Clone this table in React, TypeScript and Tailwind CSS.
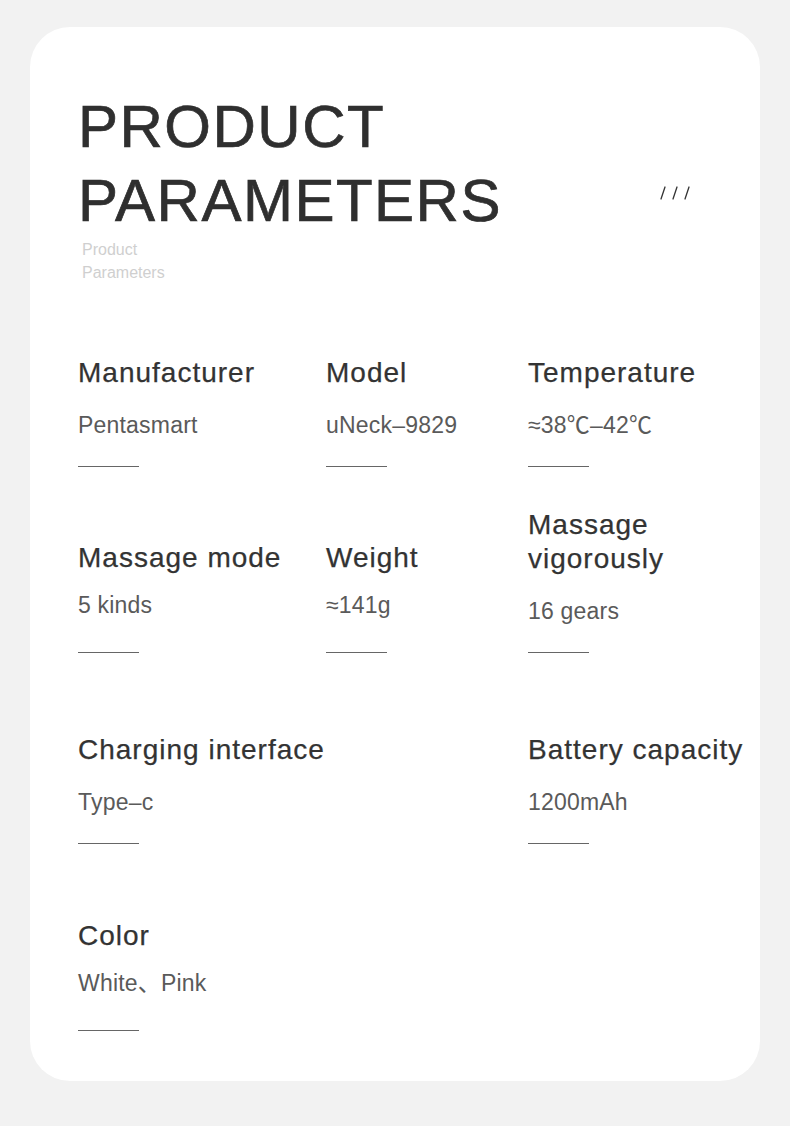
type Cell = {
  label: string[];
  value: string;
  variant: "a" | "b";
  span?: string;
};

type Row = { mt: string; cells: Cell[] };

const rows: Row[] = [
  {
    mt: "mt-[72px]",
    cells: [
      { label: ["Manufacturer"], value: "Pentasmart", variant: "a" },
      { label: ["Model"], value: "uNeck–9829", variant: "a" },
      { label: ["Temperature"], value: "≈38℃–42℃", variant: "a" },
    ],
  },
  {
    mt: "mt-[41px]",
    cells: [
      { label: ["Massage mode"], value: "5 kinds", variant: "b" },
      { label: ["Weight"], value: "≈141g", variant: "b" },
      { label: ["Massage", "vigorously"], value: "16 gears", variant: "a" },
    ],
  },
  {
    mt: "mt-[80px]",
    cells: [
      { label: ["Charging interface"], value: "Type–c", variant: "a", span: "col-span-2" },
      { label: ["Battery capacity"], value: "1200mAh", variant: "a" },
    ],
  },
  {
    mt: "mt-[75px]",
    cells: [{ label: ["Color"], value: "White、Pink", variant: "b" }],
  },
];

function ParamCell({ cell }: { cell: Cell }) {
  const a = cell.variant === "a";
  return (
    <div className={`flex flex-col ${cell.span ?? ""}`}>
      <div className="text-[28px] leading-[34px] tracking-[1px] text-[#333] [-webkit-text-stroke:0.25px_#333]">
        {cell.label.map((l) => (
          <div key={l} className="whitespace-nowrap">{l}</div>
        ))}
      </div>
      <div
        className={`${a ? "mt-5" : "mt-[15px]"} text-[23px] leading-[30px] tracking-[0.2px] text-[#5a5a5a] whitespace-nowrap`}
      >
        {cell.value}
      </div>
      <div className={`${a ? "mt-[26px]" : "mt-8"} h-px w-[61px] bg-[#666]`} />
    </div>
  );
}

export default function App() {
  return (
    <div
      className="min-h-[1126px] bg-[#f2f2f2] pt-[27px]"
      style={{ fontFamily: '"Liberation Sans", Arial, "Noto Sans CJK SC", sans-serif' }}
    >
      <div className="mx-[30px] h-[1054px] rounded-[40px] bg-white pt-[63px] pl-12">
        {/* header */}
        <div className="flex items-start">
          <div>
            <h1 className="text-[60px] leading-[74px] tracking-[1.5px] text-[#2f2f2f] [-webkit-text-stroke:0.7px_#2f2f2f]">
              PRODUCT
              <br />
              PARAMETERS
            </h1>
            <div className="ml-1 text-[16px] leading-[23px] text-[#cfcfcf]">
              Product
              <br />
              Parameters
            </div>
          </div>
          <svg
            className="ml-auto mr-[68px] mt-[96px]"
            width="34"
            height="14"
            viewBox="0 0 34 14"
          >
            <g stroke="#333" strokeWidth="1.3" strokeLinecap="round">
              <line x1="7" y1="1" x2="3" y2="13" />
              <line x1="19" y1="1" x2="15" y2="13" />
              <line x1="31" y1="1" x2="27" y2="13" />
            </g>
          </svg>
        </div>

        {/* params */}
        {rows.map((row, i) => (
          <div key={i} className={`${row.mt} grid grid-cols-[248px_202px_1fr] items-end`}>
            {row.cells.map((c) => (
              <ParamCell key={c.value} cell={c} />
            ))}
          </div>
        ))}
      </div>
    </div>
  );
}
